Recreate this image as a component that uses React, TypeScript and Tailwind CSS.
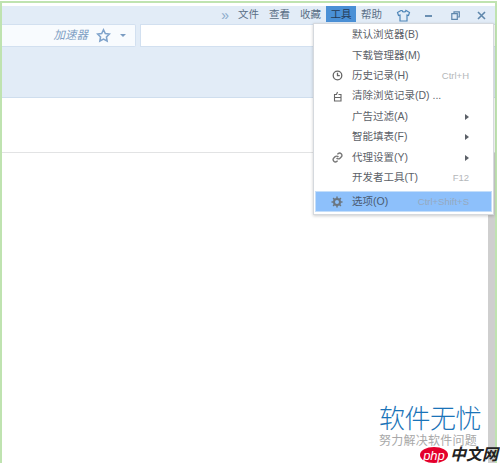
import React from "react";

function Item({ icon, label, hint, arrow }: { icon?: React.ReactNode; label: string; hint?: string; arrow?: boolean }) {
  return (
    <div className="relative flex h-[20.4px] items-center text-[10.5px] text-[#5c6168]">
      <span className="flex w-[38px] pl-[18px] text-[#6f7479]">{icon}</span>
      <span className="whitespace-nowrap">{label}</span>
      {hint && <span className="absolute right-[24px] text-[9.5px] text-[#b4b7ba]">{hint}</span>}
      {arrow && <span className="absolute right-[24px] h-0 w-0 border-y-[3px] border-l-[4px] border-y-transparent border-l-[#5c6168]" />}
    </div>
  );
}

export default function App() {
  return (
    <div className="relative flex h-[463px] w-[500px] overflow-hidden bg-white pt-[1px] font-['Liberation_Sans','Noto_Sans_CJK_SC',sans-serif]">
      <div className="flex w-[497px] flex-col border-x-2 border-t-[2px] border-[#bfe3b0] bg-white">
        <div className="h-[3px] bg-white" />
        <div className="flex h-[92px] flex-col border-b border-[#cfdeee] bg-[#e2ecf7]">
          <div className="flex h-[18px] justify-end pr-[9px] text-[10.5px] text-[#5a6f86]">
            <span className="mr-[9px] flex h-[18px] items-center text-[14px] text-[#8aa9cb]">»</span>
            <span className="mr-[10px] flex h-[18px] items-center">文件</span>
            <span className="mr-[10px] flex h-[18px] items-center">查看</span>
            <span className="mr-[5px] flex h-[18px] items-center">收藏</span>
            <span className="mr-[5px] flex h-[16px] w-[30px] items-center justify-center bg-[#4a90d6] pt-[1px] text-[#243a55]">工具</span>
            <span className="mr-[14px] flex h-[18px] items-center">帮助</span>
            <span className="mr-[14px] flex h-[18px] items-center">
              <svg width="15" height="13" viewBox="0 0 15 13" fill="none" stroke="#4f86b8" strokeWidth="1.2"><path d="M5 1.500 1.500 3.500l1 3 1.500-.5v6h7V6l1.500.5 1-3-3.500-2c-.5 2-3.500 2-4 0Z" /></svg>
            </span>
            <span className="mr-[19px] mt-[9px] h-[2px] w-[7px] bg-[#6a8fb2]" />
            <span className="mr-[17px] flex h-[18px] items-center">
              <svg width="9" height="9" viewBox="0 0 9 9" fill="none" stroke="#5f87ac" strokeWidth="1.2"><path d="M3 2V.8h5.300V6H7M.8 2.700h5.500V8.300H.8Z" /></svg>
            </span>
            <span className="flex h-[18px] items-center">
              <svg width="9" height="9" viewBox="0 0 9 9" fill="none" stroke="#5f87ac" strokeWidth="1.6"><path d="m1 1 7 7M8 1 1 8" /></svg>
            </span>
          </div>
          <div className="flex h-[23px] items-stretch">
            <div className="flex w-[134px] items-center justify-end rounded-r-[2px] border border-l-0 border-[#d2e0f0] bg-[#f8fbfe] pr-[9px]">
              <span className="mr-[8px] text-[11.500px] italic text-[#7f9fc4]">加速器</span>
              <svg className="mr-[9px]" width="15" height="15" viewBox="0 0 24 24" fill="none" stroke="#7fa3cb" strokeWidth="2.500"><path d="m12 2.800 2.900 6 6.500.9-4.700 4.600 1.100 6.500L12 17.700l-5.800 3.100 1.100-6.500-4.700-4.600 6.500-.9Z" /></svg>
              <span className="h-0 w-0 border-x-[3px] border-t-[3px] border-x-transparent border-t-[#7a9cc2]" />
            </div>
            <div className="ml-[4px] flex-1 border border-r-0 border-[#d2e0f0] bg-white" />
          </div>
        </div>
        <div className="h-[55px] border-b border-[#e2e3e4] bg-white" />
        <div className="flex flex-1 justify-end bg-white">
          <div className="w-[7px] bg-[#cfcfcf]" />
        </div>
      </div>

      <div className="absolute left-[313px] top-[23px] w-[181px] border border-[#d5d9de] bg-white pt-[1px] shadow-[0_1px_3px_rgba(0,0,0,0.2)]">
        <Item label="默认浏览器(B)" />
        <Item label="下载管理器(M)" />
        <Item label="历史记录(H)" hint="Ctrl+H" icon={<svg width="11" height="11" viewBox="0 0 11 11" fill="none" stroke="#666" strokeWidth="1.300"><circle cx="5.500" cy="5.500" r="4.300" /><path d="M5.500 2.800v2.900h2.300" /></svg>} />
        <Item label="清除浏览记录(D) ..." icon={<svg width="11" height="11" viewBox="0 0 11 11" fill="none" stroke="#666" strokeWidth="1.100"><path d="M5.500 1 4.500 3.500h-2v6.500h6.500V3.500h-2.500M2.500 6.500h6.500" /></svg>} />
        <Item label="广告过滤(A)" arrow />
        <Item label="智能填表(F)" arrow />
        <Item label="代理设置(Y)" arrow icon={<svg width="11" height="11" viewBox="0 0 24 24" fill="none" stroke="#777" strokeWidth="3"><path d="M10 13a5 5 0 0 0 7.500.5l3-3a5 5 0 0 0-7-7l-1.700 1.700" /><path d="M14 11a5 5 0 0 0-7.500-.5l-3 3a5 5 0 0 0 7 7l1.700-1.700" /></svg>} />
        <Item label="开发者工具(T)" hint="F12" />
        <div className="relative mx-[1px] mb-[2px] mt-[3px] flex h-[21px] items-center border border-[#c4defa] bg-[#8dc0fb] text-[10.5px] text-[#4a5a70]">
          <span className="flex w-[36px] pl-[15px]">
            <svg width="12" height="12" viewBox="0 0 12 12" fill="none" stroke="#6b7580"><circle cx="6" cy="6" r="3" strokeWidth="2" /><path d="M6 .5v2M6 9.500v2M.5 6h2M9.500 6h2M2.100 2.100l1.400 1.400M8.500 8.500l1.400 1.400M2.100 9.900l1.400-1.400M8.500 3.500l1.400-1.400" strokeWidth="1.500" /></svg>
          </span>
          <span className="whitespace-nowrap">选项(O)</span>
          <span className="absolute right-[22px] text-[9.5px] text-[#96a9bf]">Ctrl+Shift+S</span>
        </div>
      </div>

      <div className="absolute left-[379px] top-[404px] flex w-[110px] flex-col">
        <span className="whitespace-nowrap text-[26px] font-light leading-[30px] tracking-[-0.5px] text-[#1a73b8]">软件无忧</span>
        <span className="whitespace-nowrap text-[12px] leading-[14px] tracking-[0.25px] text-[#a8a8a8]">努力解决软件问题</span>
      </div>
      <div className="absolute left-[420px] top-[447px] flex h-[16px] items-center">
        <span className="flex h-[16px] w-[28px] items-center justify-center rounded-[50%] bg-[#e4002b] text-[13px] italic leading-none text-white">php</span>
        <span className="ml-[2px] whitespace-nowrap text-[16px] font-bold italic leading-none text-[#222]">中文网</span>
      </div>
    </div>
  );
}
